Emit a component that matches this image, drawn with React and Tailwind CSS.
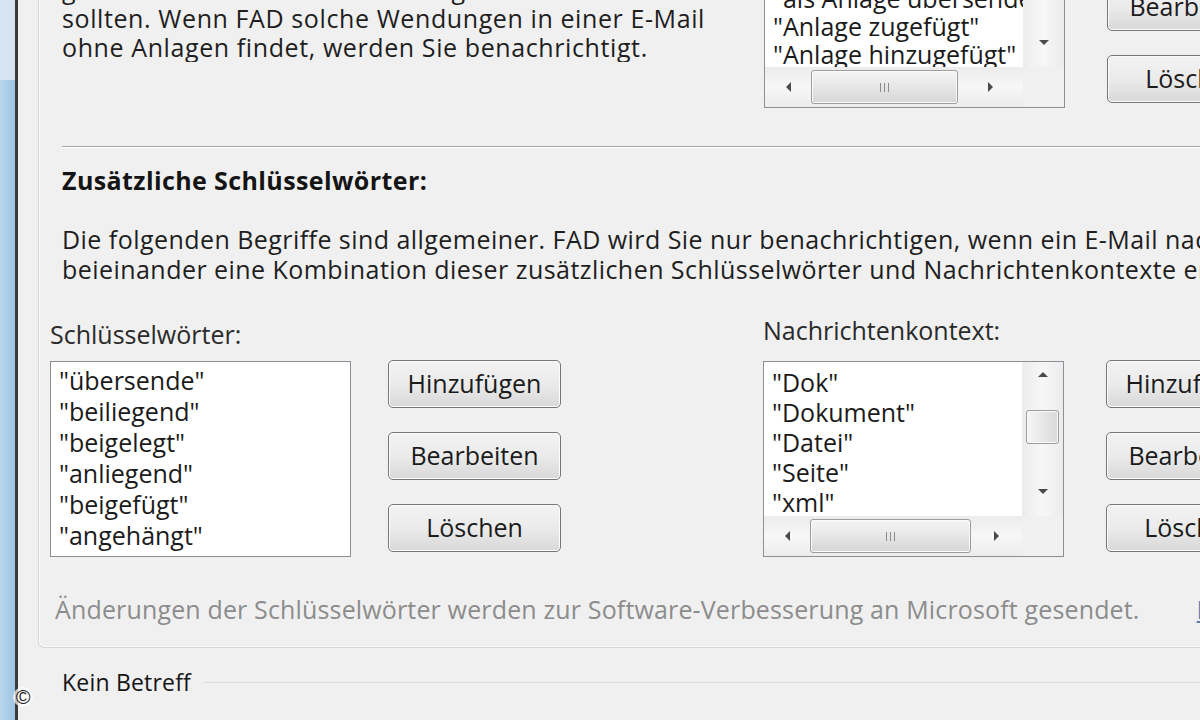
import React from 'react';

const TOP_ITEMS = ['"anbei"', '"angehängt"', '"als Anlage übersende"', '"Anlage zugefügt"', '"Anlage hinzugefügt"'];
const KEYWORDS = ['"übersende"', '"beiliegend"', '"beigelegt"', '"anliegend"', '"beigefügt"', '"angehängt"'];
const CONTEXTS = ['"Dok"', '"Dokument"', '"Datei"', '"Seite"', '"xml"', '"pdf"'];

function Arrow({ dir }) {
  const pts = {
    up: '0,6 5,1 10,6',
    down: '0,1 5,6 10,1',
    left: '6,0 1,5 6,10',
    right: '1,0 6,5 1,10',
  }[dir];
  const vertical = dir === 'up' || dir === 'down';
  return (
    <svg
      width={vertical ? 10 : 7}
      height={vertical ? 7 : 10}
      viewBox={vertical ? '0 0 10 7' : '0 0 7 10'}
      aria-hidden="true"
    >
      <polygon points={pts} fill="#4a4a4a" />
    </svg>
  );
}

function VScroll({ thumbTop, thumbHeight }) {
  return (
    <div className="w-[41px] shrink-0 flex flex-col bg-gradient-to-r from-[#ececec] via-[#f7f7f7] to-[#ececec]">
      <div className="h-[24px] flex items-center justify-center">
        <Arrow dir="up" />
      </div>
      <div className="flex-1 flex flex-col items-center">
        {thumbHeight > 0 && (
          <div
            className="w-[33px] rounded-[3px] border border-[#9c9c9c] bg-gradient-to-r from-[#f6f6f6] to-[#d9d9d9] shadow-[inset_0_0_0_1px_#fbfbfb]"
            style={{ marginTop: thumbTop, height: thumbHeight }}
          />
        )}
      </div>
      <div className="h-[50px] flex items-center justify-center">
        <Arrow dir="down" />
      </div>
    </div>
  );
}

function HScroll({ thumbWidth }) {
  return (
    <div className="h-[40px] flex shrink-0">
      <div className="flex-1 flex items-center bg-gradient-to-b from-[#ececec] via-[#f7f7f7] to-[#ececec]">
        <div className="w-[46px] flex justify-center">
          <Arrow dir="left" />
        </div>
        <div
          className="h-[34px] rounded-[3px] border border-[#9c9c9c] bg-gradient-to-b from-[#f6f6f6] to-[#d6d6d6] shadow-[inset_0_0_0_1px_#fbfbfb] flex items-center justify-center gap-[3px]"
          style={{ width: thumbWidth }}
        >
          <span className="w-px h-[9px] bg-[#8a8a8a]" />
          <span className="w-px h-[9px] bg-[#8a8a8a]" />
          <span className="w-px h-[9px] bg-[#8a8a8a]" />
        </div>
        <div className="flex-1 flex justify-center">
          <Arrow dir="right" />
        </div>
      </div>
      <div className="w-[41px] bg-[#f0f0f0]" />
    </div>
  );
}

function ListBox({ items, scroll, leading, padTop, thumbTop, thumbHeight, hThumb }) {
  return (
    <div className="w-[301px] h-[196px] shrink-0 border border-[#8b8f96] bg-white flex flex-col overflow-hidden">
      <div className="flex flex-1 min-h-0">
        <ul
          className="flex-1 min-w-0 overflow-hidden pl-[8px] text-[#1b1b1b] whitespace-nowrap"
          style={{ paddingTop: padTop, lineHeight: leading }}
        >
          {items.map((it) => (
            <li key={it}>{it}</li>
          ))}
        </ul>
        {scroll && <VScroll thumbTop={thumbTop} thumbHeight={thumbHeight} />}
      </div>
      {scroll && <HScroll thumbWidth={hThumb} />}
    </div>
  );
}

function WinButton({ children }) {
  return (
    <button
      type="button"
      className="w-[173px] h-[48px] shrink-0 rounded-[5px] border border-[#767676] bg-gradient-to-b from-[#f3f3f3] via-[#ebebeb] to-[#d8d8d8] shadow-[inset_0_0_0_1px_#fcfcfc] text-[#1b1b1b] text-center whitespace-nowrap overflow-hidden"
    >
      {children}
    </button>
  );
}

function Group({ listProps, gap, labels }) {
  return (
    <div className="flex items-start shrink-0">
      <ListBox {...listProps} />
      <div className="flex flex-col gap-[24px] -mt-px" style={{ marginLeft: gap }}>
        {labels.map((l) => (
          <WinButton key={l}>{l}</WinButton>
        ))}
      </div>
    </div>
  );
}

const BUTTONS = ['Hinzufügen', 'Bearbeiten', 'Löschen'];

export default function App() {
  return (
    <div className="w-[1200px] h-[720px] overflow-hidden flex bg-[#f0f0f0] font-['Open_Sans',Arial,sans-serif] text-[25px] relative">
      <div className="w-[15px] shrink-0 flex flex-col">
        <div className="h-[80px] bg-[#d6e5f1]" />
        <div className="flex-1 bg-gradient-to-r from-[#b9d6ec] to-[#9fc4e2]" />
      </div>
      <div className="w-[3px] shrink-0 bg-[#3a3a3a]" />

      <div className="flex-1 min-w-0 flex flex-col pl-[20px]">
        <div className="h-[648px] shrink-0 border-l border-b border-[#d6d6d6] rounded-bl-[6px] shadow-[inset_1px_-1px_0_#fbfbfb] flex flex-col">
          {/* upper section, mostly scrolled out of view */}
          <div className="flex items-start -mt-[88px] shrink-0">
            <div className="w-[725px] shrink-0 pl-[23px] pt-[63px] leading-[29px] tracking-[0.6px] text-[#1e1e1e] whitespace-nowrap overflow-hidden">
              <p>grosser Wahrscheinlichkeit Anlagen vorhanden sein</p>
              <p>sollten. Wenn FAD solche Wendungen in einer E-Mail</p>
              <p>ohne Anlagen findet, werden Sie benachrichtigt.</p>
            </div>
            <Group
              gap={42}
              labels={BUTTONS}
              listProps={{
                items: TOP_ITEMS,
                scroll: true,
                leading: '28px',
                padTop: 15,
                thumbTop: 10,
                thumbHeight: 0,
                hThumb: 147,
              }}
            />
          </div>

          <div className="ml-[23px] mt-[38px] h-0 border-t border-b border-t-[#a9a9a9] border-b-white shrink-0" />

          <h2 className="ml-[23px] mt-[18px] leading-[29px] font-bold tracking-[0.4px] text-[#141414]">
            Zusätzliche Schlüsselwörter:
          </h2>

          <div className="ml-[23px] mt-[29px] leading-[30px] tracking-[0.45px] text-[#1e1e1e] whitespace-nowrap">
            <p>Die folgenden Begriffe sind allgemeiner. FAD wird Sie nur benachrichtigen, wenn ein E-Mail nach</p>
            <p>beieinander eine Kombination dieser zusätzlichen Schlüsselwörter und Nachrichtenkontexte enthält.</p>
          </div>

          <div className="flex ml-[11px] mt-[36px] shrink-0">
            <div className="w-[713px] shrink-0">
              <div className="leading-[29px] text-[#2a2a2a] mb-[12px]">Schlüsselwörter:</div>
              <Group
                gap={37}
                labels={BUTTONS}
                listProps={{ items: KEYWORDS, scroll: false, leading: '31px', padTop: 3 }}
              />
            </div>
            <div className="shrink-0">
              <div className="leading-[29px] text-[#2a2a2a] mb-[16px] -mt-[4px]">Nachrichtenkontext:</div>
              <Group
                gap={42}
                labels={BUTTONS}
                listProps={{
                  items: CONTEXTS,
                  scroll: true,
                  leading: '30px',
                  padTop: 5,
                  thumbTop: 24,
                  thumbHeight: 34,
                  hThumb: 161,
                }}
              />
            </div>
          </div>

          <div className="flex items-center ml-[16px] mt-[38px] leading-[29px] tracking-[0.15px] text-[#8c8c8c] whitespace-nowrap">
            <span>Änderungen der Schlüsselwörter werden zur Software-Verbesserung an Microsoft gesendet.</span>
            <span className="ml-[57px] text-[#5a7fb0] underline">Datenschutz</span>
          </div>
        </div>

        <div className="flex items-center mt-[20px] ml-[24px] gap-[12px]">
          <span className="text-[23px] leading-[29px] tracking-[0.2px] text-[#151515] whitespace-nowrap">Kein Betreff</span>
          <div className="flex-1 h-0 border-t border-[#d3dee6]" />
        </div>
      </div>

      <span className="absolute left-[13px] top-[687px] w-[20px] h-[20px] rounded-full bg-white/70 text-[20px] leading-[20px] text-center text-[#222] font-['Liberation_Sans',sans-serif]">
        ©
      </span>
    </div>
  );
}
